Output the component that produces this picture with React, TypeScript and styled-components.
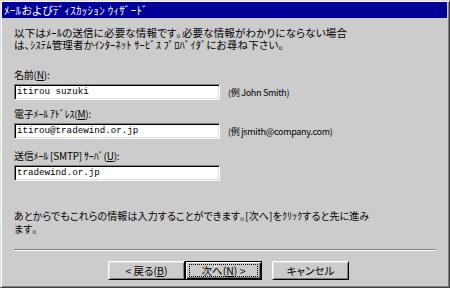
import React from "react";
import styled, { createGlobalStyle } from "styled-components";

const jp = `"Noto Sans CJK JP", "MS UI Gothic", sans-serif`;

const Global = createGlobalStyle`
  html, body { margin: 0; padding: 0; background: #cccccc; }
  body { width: 450px; height: 288px; overflow: hidden; }
`;

const Window = styled.div`
  box-sizing: border-box;
  width: 450px;
  height: 288px;
  background: #cccccc;
  border-top: 1px solid #dfdfdf;
  border-left: 1px solid #dfdfdf;
  border-right: 1px solid #404040;
  border-bottom: 1px solid #404040;
  box-shadow: inset 1px 1px 0 #ffffff, inset -1px -1px 0 #808080;
  padding: 1px 2px 2px 1px;
  display: flex;
  flex-direction: column;
  font-family: ${jp};
  font-feature-settings: "palt";
  color: #000;
`;

const TitleBar = styled.div`
  height: 16px;
  background: #000099;
  color: #ffffff;
  font-size: 11px;
  letter-spacing: 0.3px;
  line-height: 16px;
  padding-left: 2px;
  white-space: nowrap;
`;

const Content = styled.div`
  padding: 9px 0 0 12px;
  display: flex;
  flex-direction: column;
`;

const Para = styled.p<{ $size: number; $lh: number; $ls: number; $mt: number }>`
  margin: ${(p) => p.$mt}px 0 0 0;
  font-size: ${(p) => p.$size}px;
  line-height: ${(p) => p.$lh}px;
  letter-spacing: ${(p) => p.$ls}px;
  white-space: nowrap;
`;

const Field = styled.div<{ $mt: number }>`
  margin-top: ${(p) => p.$mt}px;
  display: flex;
  flex-direction: column;
`;

const Label = styled.div`
  font-size: 10px;
  letter-spacing: -0.2px;
  line-height: 12px;
  height: 12px;
  white-space: nowrap;
`;

const Row = styled.div`
  margin-top: 3px;
  display: flex;
  align-items: center;
  gap: 8px;
`;

const TextBox = styled.div`
  box-sizing: border-box;
  width: 206px;
  height: 16px;
  background: #ffffff;
  border-top: 1px solid #808080;
  border-left: 1px solid #808080;
  border-right: 1px solid #ffffff;
  border-bottom: 1px solid #ffffff;
  box-shadow: inset 1px 1px 0 #000000, inset -1px -1px 0 #dfdfdf;
  padding-left: 2px;
  font-family: "Liberation Mono", "DejaVu Sans Mono", monospace;
  font-size: 9.2px;
  line-height: 14px;
  white-space: nowrap;
`;

const Example = styled.span`
  font-size: 9px;
  letter-spacing: -0.3px;
  white-space: nowrap;
`;

const Separator = styled.div`
  margin-top: 14px;
  width: 422px;
  border-top: 1px solid #808080;
  border-bottom: 1px solid #ffffff;
`;

const ButtonRow = styled.div`
  margin-top: 10px;
  padding-left: 94px;
  display: flex;
`;

const Button = styled.div<{ $default?: boolean; $ml?: number }>`
  box-sizing: border-box;
  width: 77px;
  height: 19px;
  margin-left: ${(p) => p.$ml ?? 0}px;
  background: #cccccc;
  display: flex;
  align-items: center;
  justify-content: center;
  font-size: 10.5px;
  white-space: nowrap;
  border: 1px solid;
  border-color: ${(p) =>
    p.$default ? "#000000" : "#ffffff #000000 #000000 #ffffff"};
  box-shadow: ${(p) =>
    p.$default
      ? "inset 1px 1px 0 #ffffff, inset -1px -1px 0 #000000, inset -2px -2px 0 #808080"
      : "inset 1px 1px 0 #dfdfdf, inset -1px -1px 0 #808080"};
`;

const Focus = styled.span`
  box-sizing: border-box;
  width: 69px;
  height: 13px;
  border: 1px dotted #000000;
  display: flex;
  align-items: center;
  justify-content: center;
  line-height: 11px;
`;

const Key = styled.u`
  text-decoration: underline;
  text-underline-offset: 1px;
`;

export default function App() {
  return (
    <>
      <Global />
      <Window>
        <TitleBar>ﾒｰﾙおよびﾃﾞｨｽｶｯｼｮﾝ ｳｨｻﾞｰﾄﾞ</TitleBar>
        <Content>
          <Para $size={10.5} $lh={12} $ls={0.15} $mt={0}>
            以下はﾒｰﾙの送信に必要な情報です｡必要な情報がわかりにならない場合
            <br />
            は､ｼｽﾃﾑ管理者かｲﾝﾀｰﾈｯﾄ ｻｰﾋﾞｽ ﾌﾟﾛﾊﾞｲﾀﾞにお尋ね下さい｡
          </Para>
          <Field $mt={18}>
            <Label>
              名前(<Key>N</Key>):
            </Label>
            <Row>
              <TextBox>itirou suzuki</TextBox>
              <Example>(例 John Smith)</Example>
            </Row>
          </Field>
          <Field $mt={8}>
            <Label>
              電子ﾒｰﾙ ｱﾄﾞﾚｽ(<Key>M</Key>):
            </Label>
            <Row>
              <TextBox>itirou@tradewind.or.jp</TextBox>
              <Example>(例 jsmith@company.com)</Example>
            </Row>
          </Field>
          <Field $mt={11}>
            <Label>
              送信ﾒｰﾙ [SMTP] ｻｰﾊﾞ(<Key>U</Key>):
            </Label>
            <Row>
              <TextBox>tradewind.or.jp</TextBox>
            </Row>
          </Field>
          <Para $size={10} $lh={13} $ls={0.1} $mt={28}>
            あとからでもこれらの情報は入力することができます｡[次へ]をｸﾘｯｸすると先に進み
            <br />
            ます｡
          </Para>
          <Separator />
          <ButtonRow>
            <Button>
              &lt; 戻る(<Key>B</Key>)
            </Button>
            <Button $default>
              <Focus>
                次へ(<Key>N</Key>) &gt;
              </Focus>
            </Button>
            <Button $ml={10}>キャンセル</Button>
          </ButtonRow>
        </Content>
      </Window>
    </>
  );
}
